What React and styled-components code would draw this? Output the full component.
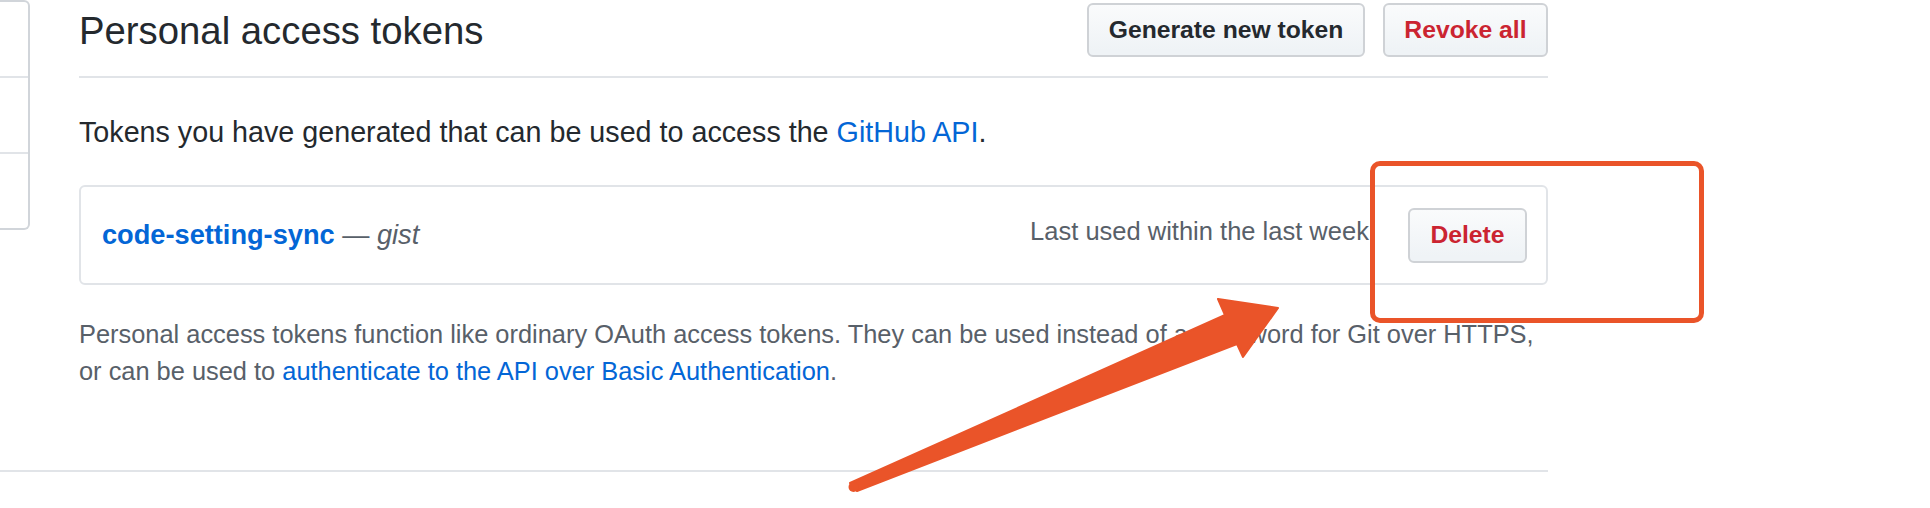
import styled, { createGlobalStyle } from "styled-components";

const GlobalStyle = createGlobalStyle`
  html, body {
    margin: 0;
    padding: 0;
    background: #fff;
  }
  body {
    font-family: "Liberation Sans", Arial, Helvetica, sans-serif;
    color: #24292e;
  }
`;

const Page = styled.div`
  position: relative;
  width: 1930px;
  height: 508px;
  overflow: hidden;
`;

const Layout = styled.div`
  display: flex;
  width: 1548px;
  gap: 49px;
`;

const Sidebar = styled.nav`
  width: 30px;
  flex-shrink: 0;
  align-self: flex-start;
  box-sizing: border-box;
  border: 2px solid #d1d5da;
  border-left: none;
  border-radius: 0 6px 6px 0;
`;

const SideItem = styled.div`
  height: 74px;
  border-bottom: 2px solid #e1e4e8;
  &:last-child {
    border-bottom: none;
  }
`;

const Main = styled.main`
  flex: 1;
  min-width: 0;
`;

const Header = styled.div`
  display: flex;
  align-items: center;
  justify-content: space-between;
  padding: 3px 0 19px;
  border-bottom: 2px solid #e1e4e8;
`;

const Title = styled.h2`
  margin: 2px 0 0;
  font-size: 38.3px;
  font-weight: 400;
  line-height: 1.15;
  color: #24292e;
`;

const Actions = styled.div`
  display: flex;
  gap: 18px;
`;

const Button = styled.button`
  display: inline-flex;
  align-items: center;
  height: ${(props) => props.h || 54}px;
  padding: 0 ${(props) => props.px || 19.5}px;
  box-sizing: border-box;
  font-family: inherit;
  font-size: 24.7px;
  font-weight: 700;
  color: ${(props) => (props.danger ? "#cb2431" : "#24292e")};
  background: linear-gradient(-180deg, #fafbfc 0%, #eff3f6 90%);
  border: 2px solid #cfd2d6;
  border-radius: 6px;
  cursor: pointer;
`;

const Intro = styled.p`
  margin: 33px 0 0;
  font-size: 28.7px;
  line-height: 42px;
  color: #24292e;
`;

const Link = styled.a`
  color: #0366d6;
  text-decoration: none;
  font-weight: ${(props) => (props.bold ? 700 : 400)};
`;

const TokenBox = styled.div`
  margin-top: 32px;
  height: 100px;
  box-sizing: border-box;
  display: flex;
  align-items: center;
  padding: 0 19px 0 21px;
  border: 2px solid #e1e4e8;
  border-radius: 6px;
`;

const TokenName = styled.div`
  flex: 1;
  font-size: 27.2px;
  color: #586069;
`;

const Scope = styled.em`
  font-style: italic;
  color: #586069;
`;

const LastUsed = styled.span`
  font-size: 25.5px;
  color: #586069;
  margin: 0 39px 8px 0;
`;

const Note = styled.p`
  margin: 31px 0 0;
  font-size: 25.4px;
  line-height: 37px;
  color: #586069;
`;

const Footer = styled.footer`
  width: 1548px;
  margin-top: 80px;
  border-top: 2px solid #e1e4e8;
`;

const Highlight = styled.div`
  position: absolute;
  left: 1370px;
  top: 161px;
  width: 334px;
  height: 162px;
  box-sizing: border-box;
  border: 5px solid #ea5429;
  border-radius: 10px;
`;

const Overlay = styled.svg`
  position: absolute;
  left: 0;
  top: 0;
  pointer-events: none;
`;

const Arrow = () => (
  <Overlay width="1930" height="508" viewBox="0 0 1930 508">
    <polygon
      points="850,483 1225,315 1218,299 1278,308 1243,357 1237,344 857,491"
      fill="#ea5429"
      stroke="#ea5429"
      strokeWidth="2"
      strokeLinejoin="round"
    />
    <circle cx="853.5" cy="487" r="5" fill="#ea5429" />
  </Overlay>
);

const App = () => {
  return (
    <Page>
      <GlobalStyle />
      <Layout>
        <Sidebar>
          <SideItem />
          <SideItem />
          <SideItem />
        </Sidebar>
        <Main>
          <Header>
            <Title>Personal access tokens</Title>
            <Actions>
              <Button>Generate new token</Button>
              <Button danger>Revoke all</Button>
            </Actions>
          </Header>
          <Intro>
            Tokens you have generated that can be used to access the{" "}
            <Link href="#">GitHub API</Link>.
          </Intro>
          <TokenBox>
            <TokenName>
              <Link href="#" bold>code-setting-sync</Link> — <Scope>gist</Scope>
            </TokenName>
            <LastUsed>Last used within the last week</LastUsed>
            <Button danger h={55} px={20.5}>Delete</Button>
          </TokenBox>
          <Note>
            Personal access tokens function like ordinary OAuth access tokens. They can be used
            instead of a password for Git over HTTPS, or can be used to{" "}
            <Link href="#">authenticate to the API over Basic Authentication</Link>.
          </Note>
        </Main>
      </Layout>
      <Footer />
      <Highlight />
      <Arrow />
    </Page>
  );
};

export default App;
